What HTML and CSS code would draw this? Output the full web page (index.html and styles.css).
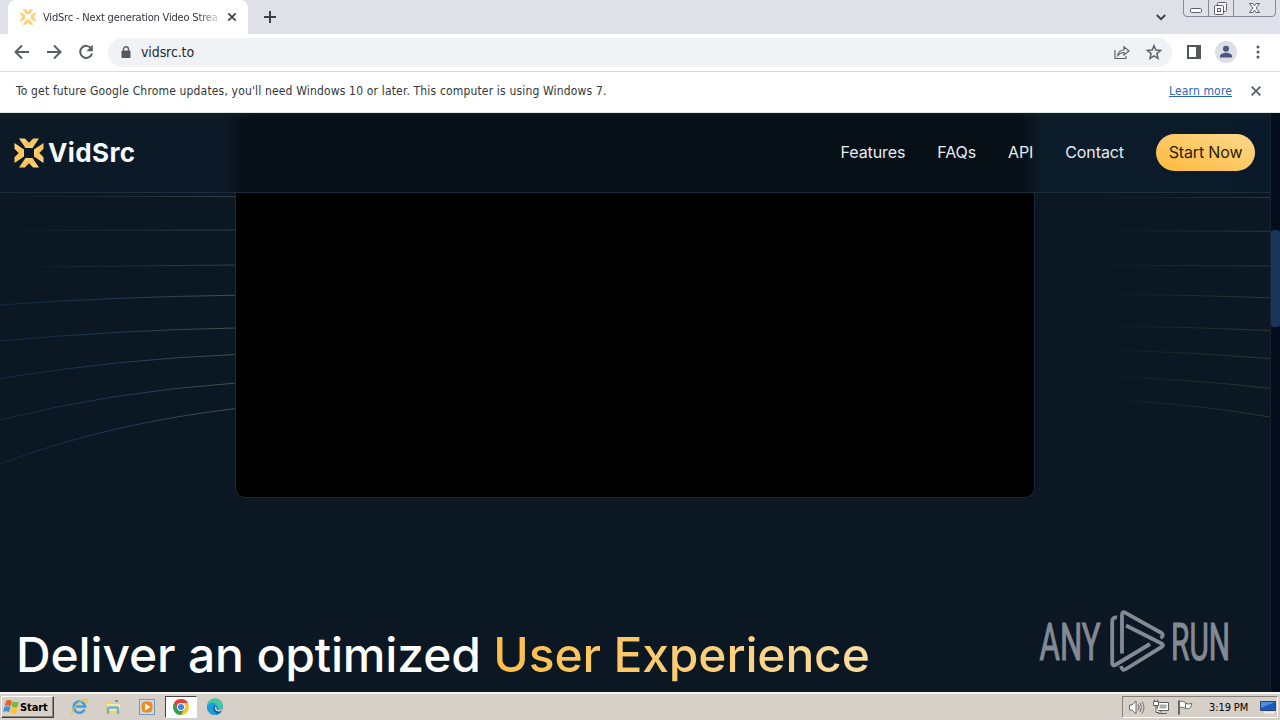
FILE: index.html
```html
<!DOCTYPE html>
<html lang="en">
<head>
  <meta charset="UTF-8">
  <meta name="viewport" content="width=device-width, initial-scale=1.0">
  <title>VidSrc - Next generation Video Streaming</title>
  <link rel="stylesheet" href="styles.css">
</head>
<body>
  <svg class="defs" width="0" height="0">
    <defs>
      <linearGradient id="gold" x1="0" y1="0" x2="1" y2="1">
        <stop offset="0" stop-color="#ffd98a"/>
        <stop offset="0.5" stop-color="#fcc257"/>
        <stop offset="1" stop-color="#fddb9c"/>
      </linearGradient>
      <symbol id="mark" viewBox="0 0 30 30">
        <path d="M5 0.500h5.800l4.200 4.200 4.200-4.200H25L18.500 10h-7z"/>
        <path d="M5 29.500h5.800l4.200-4.200 4.200 4.200H25L18.500 20h-7z"/>
        <path d="M0.500 5v5.800l4.200 4.200-4.200 4.200V25L10 18.500v-7z"/>
        <path d="M29.500 5v5.800l-4.200 4.200 4.200 4.200V25L20 18.500v-7z"/>
      </symbol>
    </defs>
  </svg>

  <header class="tabs">
    <div class="tab-edge"></div>
    <div class="tab">
      <svg class="favicon" width="16" height="16" fill="#fdcf80"><use href="#mark"/></svg>
      <span class="tab-title">VidSrc - Next generation Video Strea</span>
      <svg class="tab-close" width="10" height="10" viewBox="0 0 10 10"><path d="M1.300 1.300l7.400 7.400M8.700 1.300L1.300 8.700" stroke="#3c4043" stroke-width="1.700"/></svg>
    </div>
    <svg class="new-tab" width="12" height="12" viewBox="0 0 12 12"><path d="M6 0v12M0 6h12" stroke="#3c4043" stroke-width="2"/></svg>
    <svg class="tab-search" width="10" height="7" viewBox="0 0 10 7"><path d="M0.800 1l4.200 4.200L9.200 1" fill="none" stroke="#3c4043" stroke-width="1.800"/></svg>
    <svg class="window-buttons" width="93" height="17" viewBox="0 0 93 17" fill="none">
      <path d="M0.500 0v13q0 3.500 3.500 3.500h85q3.500 0 3.500-3.500V0M25.500 0v16M50.500 0v16" stroke="#858a96"/>
      <rect x="7.500" y="8.500" width="11" height="4" rx="1" fill="#fff" stroke="#5c606b"/>
      <rect x="34.500" y="2.500" width="9" height="9" rx="1" fill="#f4f5f7" stroke="#5c606b"/>
      <rect x="31.500" y="5.500" width="9" height="9" rx="1" fill="#fff" stroke="#5c606b"/>
      <rect x="34.500" y="8.500" width="3" height="3" stroke="#5c606b"/>
      <path d="M66.500 3.500h3.300l1.700 2.300 1.700-2.300h3.300l-3.300 4.500 3.300 4.500h-3.300l-1.700-2.300-1.700 2.300h-3.300l3.300-4.500z" fill="#fff" stroke="#5c606b"/>
    </svg>
  </header>

  <div class="toolbar">
    <div class="nav-buttons">
      <svg width="16" height="16" viewBox="0 0 16 16"><path d="M15 8H2M8 1.500L1.500 8 8 14.500"/></svg>
      <svg width="16" height="16" viewBox="0 0 16 16"><path d="M1 8h13M8 1.500L14.500 8 8 14.500"/></svg>
      <svg width="16" height="16" viewBox="0 0 16 16"><path d="M13.200 4.500A6 6 0 1 0 14 9.500"/><path d="M14.800 0.800v6.400H8.400z" class="solid"/></svg>
    </div>
    <div class="address">
      <svg width="10" height="13" viewBox="0 0 10 13"><path d="M2.500 5V3.300a2.500 2.500 0 0 1 5 0V5" fill="none" stroke="#5f6368" stroke-width="1.400"/><rect x="0.500" y="4.500" width="9" height="7.500" rx="1" fill="#54575b"/></svg>
      <span class="url">vidsrc.to</span>
      <svg class="share" width="16" height="15" viewBox="0 0 16 15"><path d="M1 5v8.500h11V11M3.700 10.500C4.200 6.500 6.500 5 10 5V1.800l5 4.200-5 4V7.500c-2.800 0-4.500.8-6.300 3z" fill="none" stroke="#5f6368" stroke-width="1.200"/></svg>
      <svg width="16" height="16" viewBox="0 0 16 16"><path d="M8 1.700l1.800 4.400 4.700.4-3.600 3.100 1.100 4.700L8 11.800l-4 2.500 1.100-4.700-3.600-3.100 4.700-.4z" fill="none" stroke="#5f6368" stroke-width="1.500"/></svg>
    </div>
    <svg class="panel" width="14" height="14" viewBox="0 0 14 14"><path d="M1 1h12v12H1z" fill="none" stroke="#54575b" stroke-width="2"/><path d="M9 0h5v14H9z" fill="#54575b"/></svg>
    <svg class="avatar" width="22" height="22" viewBox="0 0 22 22"><circle cx="11" cy="11" r="11" fill="#dcdfe5"/><circle cx="11" cy="7.800" r="3" fill="#4a5878"/><path d="M5 16.500v-1.300c0-2.200 3.700-3.400 6-3.400s6 1.200 6 3.400v1.300z" fill="#4a5878"/></svg>
    <svg class="dots" width="4" height="14" viewBox="0 0 4 14" fill="#54575b"><circle cx="2" cy="2" r="1.500"/><circle cx="2" cy="7" r="1.500"/><circle cx="2" cy="12" r="1.500"/></svg>
  </div>

  <div class="infobar">
    <span class="notice">To get future Google Chrome updates, you'll need Windows 10 or later. This computer is using Windows 7.</span>
    <a class="learn" href="#">Learn more</a>
    <svg width="10" height="10" viewBox="0 0 10 10"><path d="M0.700 0.700l8.600 8.600M9.300 0.700L0.700 9.300" stroke="#5f6368" stroke-width="1.900"/></svg>
  </div>

  <div class="viewport">
    <main class="page">
      <svg class="lines" width="1270" height="579" viewBox="0 113 1270 579" fill="none">
        <defs>
          <linearGradient id="left" gradientUnits="userSpaceOnUse" x1="0" y1="0" x2="236" y2="0">
            <stop offset="0" stop-color="#1d3157" stop-opacity="0.600"/>
            <stop offset="0.500" stop-color="#24365a"/>
            <stop offset="1" stop-color="#43524c"/>
          </linearGradient>
          <linearGradient id="left-top" gradientUnits="userSpaceOnUse" x1="0" y1="0" x2="236" y2="0">
            <stop offset="0" stop-color="#24384d" stop-opacity="0.100"/>
            <stop offset="1" stop-color="#33433f"/>
          </linearGradient>
          <linearGradient id="right" gradientUnits="userSpaceOnUse" x1="1080" y1="0" x2="1270" y2="0">
            <stop offset="0" stop-color="#26342f" stop-opacity="0"/>
            <stop offset="1" stop-color="#2c3a36"/>
          </linearGradient>
        </defs>
        <g stroke="url(#left-top)">
          <path d="M0 196.400L236 196.600"/>
          <path d="M0 230.400L236 230"/>
          <path d="M0 267.500Q110 266 236 265"/>
        </g>
        <g stroke="url(#left)">
          <path d="M0 305Q110 297 236 295.200"/>
          <path d="M0 341Q120 330 236 328"/>
          <path d="M0 378.500Q120 359 236 354.500"/>
          <path d="M0 420Q110 392 236 383"/>
          <path d="M0 464Q105 424 236 408.500"/>
        </g>
        <g stroke="url(#right)">
          <path d="M1035 197.300L1270 197.600"/>
          <path d="M1035 230.500L1270 231.300"/>
          <path d="M1080 265L1270 266"/>
          <path d="M1100 294Q1190 295 1270 297.800"/>
          <path d="M1110 326Q1190 327 1270 330.500"/>
          <path d="M1110 350Q1190 352 1270 358.500"/>
          <path d="M1120 377Q1200 380 1270 388.500"/>
          <path d="M1130 401Q1200 405 1270 417"/>
        </g>
      </svg>

      <nav class="navbar">
        <div class="brand">
          <svg width="30" height="30" fill="url(#gold)"><use href="#mark"/></svg>
          <span>VidSrc</span>
        </div>
        <div class="links">
          <a>Features</a>
          <a>FAQs</a>
          <a>API</a>
          <a>Contact</a>
        </div>
        <button class="start-now">Start Now</button>
      </nav>

      <div class="player"></div>
      <h1 class="headline">Deliver an optimized <span>User Experience</span></h1>

      <svg class="watermark" width="194" height="64" viewBox="0 0 194 64">
        <text x="1.500" y="49.500" textLength="61" lengthAdjust="spacingAndGlyphs">ANY</text>
        <text x="133" y="49.500" textLength="59" lengthAdjust="spacingAndGlyphs">RUN</text>
        <g fill="none" stroke="#838a94" stroke-width="3.800" stroke-linejoin="round">
          <path d="M79 7.500q-4.800-.5-4.800 4V53q0 3.500 3 2L112 34"/>
          <path d="M84 43.500V5q0-4 3.500-2.200L123.500 23q3 2.500-1 5"/>
          <path d="M88 15.500l35.500 18q3 1.700 0 3.500L88 59q-4 2.500-5-3"/>
        </g>
      </svg>
    </main>
    <div class="scrollbar"><div class="thumb"></div></div>
  </div>

  <footer class="taskbar">
    <button class="start">
      <svg width="17" height="16" viewBox="0 0 17 16">
        <path d="M3 2q3-2 6 0L7.700 7.300q-3-1.600-6 0z" fill="#e8622c"/>
        <path d="M9.700 2.500q3 1.500 6 0L14.500 8q-3 1.500-6-.5z" fill="#76b83f"/>
        <path d="M1.500 8q3-1.600 6 0L6 13q-3-1.500-6 0z" fill="#3f8fe0"/>
        <path d="M8.300 8.300q3 1.700 6 .3L13 14q-3 1.500-6-.5z" fill="#fbc431"/>
      </svg>
      Start
    </button>
    <div class="apps">
      <svg width="18" height="18" viewBox="0 0 18 18"><path d="M14.500 11.500A5.700 5.700 0 1 1 15 8.500H5" fill="none" stroke="#3ba0e3" stroke-width="2.600"/><path d="M2.500 16.500C-1 14 10 1 16 1.500c2 .3 1 3 0 4" fill="none" stroke="#e9bd45" stroke-width="1.300"/></svg>
      <svg width="18" height="18" viewBox="0 0 18 18"><path d="M2 3h5l1 2h8v10H2z" fill="#ebcf72"/><path d="M3 6h13v7H3z" fill="#f8eaa7"/><path d="M4 16v-5q0-1.500 1.500-1.500h7Q14 9.500 14 11v5" fill="none" stroke="#6db3d8" stroke-width="2.500"/><path d="M11 3h3" stroke="#67a75b" stroke-width="2"/></svg>
      <svg width="18" height="18" viewBox="0 0 18 18"><rect x="1.500" y="1.500" width="15" height="15" fill="#c8dced" stroke="#6f9bc0"/><rect x="3.500" y="3.500" width="11" height="11" rx="4" fill="#f38b1c"/><path d="M7 5.500v7l5.500-3.500z" fill="#fff"/></svg>
      <div class="app-active">
        <svg width="16" height="16" viewBox="0 0 16 16"><circle cx="8" cy="8" r="8" fill="#f9c52d"/><path d="M1.070 4A8 8 0 0 0 8 16l3.500-6L8 8z" fill="#2fa251"/><path d="M8 4h6.930A8 8 0 0 0 1.070 4L4.500 10z" fill="#df4434"/><circle cx="8" cy="8" r="4" fill="#fff"/><circle cx="8" cy="8" r="3.100" fill="#4285f4"/></svg>
      </div>
      <svg width="18" height="18" viewBox="0 0 18 18"><circle cx="9" cy="9" r="8" fill="#1677c8"/><path d="M1 8.500A8 8 0 0 1 17 8c.3 3-2.500 4-5.500 3 1-2-.5-4-3.500-4-3 0-5.500.5-7 1.500z" fill="#43c7a0"/><path d="M1 9c1-5 8-6 9-2-3 0-4 5-.5 8 .5 1 2 1.500 3 1.200C7 18.500 1 15 1 9z" fill="#1aa0dc"/><path d="M9 8c-2 3 .5 6.500 6.700 5.200C14 16 9 15 7.500 12 6.800 10.500 7.500 9 9 8z" fill="#174f9b"/><path d="M9.500 8.300q1.500.5 1 2.600 3 2 6.300-.3-.3 1.900-1.300 2.500-5 1.200-6.500-1.500-.5-2 .5-3.300z" fill="#d6d0c8"/></svg>
    </div>
    <div class="tray">
      <svg width="17" height="15" viewBox="0 0 17 15" fill="#fff" stroke="#6b6b6b"><path d="M1.500 5h2.500l4-4v13l-4-4H1.500z"/><path d="M10 4.500q2 3 0 6M12 3q3 4.500 0 9M14 1.500q4 6 0 12" fill="none"/></svg>
      <svg class="network" width="16" height="16" viewBox="0 0 16 16" fill="#fff" stroke="#5f5f5f"><path d="M4.500 3.500h11v8h-11z"/><path d="M6.500 5.500h7v4h-7z" fill="#aaa" stroke="none"/><path d="M8 11.500v2M5 14.500h9"/><path d="M0.500 2.500h5v4h-5zM1.500 0.500v2M4.500 0.500v2M3 6.500v7h3"/></svg>
      <svg class="flag" width="16" height="15" viewBox="0 0 16 15" fill="#fff" stroke="#6b6b6b"><path d="M1.500 0.500h1v14h-1zM2.500 1.500q3-1 6 1v6q-3-2-6-1zM8.500 3.500q3 1 6.500 0-1 4-3 5.200-2 .5-3.500-.7z"/></svg>
      <span class="clock">3:19 PM</span>
      <svg class="desktop" width="16" height="14" viewBox="0 0 16 14"><path d="M0.500 1.500h15v9h-15z" fill="#1b5bbb" stroke="#2b456f"/><path d="M1 2h14L1 8z" fill="#4a8de0"/><path d="M4 12.500h10" stroke="#efefef" stroke-width="2"/></svg>
    </div>
  </footer>
</body>
</html>
```

FILE: styles.css
```css
* {
  box-sizing: border-box;
}
body {
  margin: 0;
  width: 1280px;
  height: 720px;
  overflow: hidden;
  display: flex;
  flex-direction: column;
  font-family: "DejaVu Sans Condensed", "DejaVu Sans", sans-serif;
  font-stretch: condensed;
  background: #fff;
}
svg {
  display: block;
  flex: none;
}
.defs {
  position: absolute;
}

/* browser window */
.tabs {
  height: 34px;
  flex: none;
  display: flex;
  align-items: flex-start;
  background: #dee1e8;
}
.tab-edge {
  width: 8px;
  height: 34px;
}
.tab {
  width: 240px;
  height: 34px;
  padding: 0 11px 0 12px;
  display: flex;
  align-items: center;
  background: #fff;
  border-radius: 8px 8px 0 0;
}
.tab-title {
  width: 178px;
  margin: 0 6px 0 7px;
  font-size: 11px;
  letter-spacing: -0.18px;
  white-space: nowrap;
  color: #33363a;
  -webkit-mask-image: linear-gradient(90deg, #000 155px, transparent 180px);
  mask-image: linear-gradient(90deg, #000 155px, transparent 180px);
}
.new-tab {
  margin: 11px 0 0 16px;
}
.tab-search {
  margin: 14px 17px 0 auto;
}
.window-buttons {
  margin-right: 4px;
}
.toolbar {
  height: 38px;
  flex: none;
  padding: 0 20px 1px 14px;
  display: flex;
  align-items: center;
  border-bottom: 1px solid #d9dbdf;
}
.nav-buttons {
  display: flex;
  gap: 16px;
  margin-right: 14px;
}
.nav-buttons path {
  fill: none;
  stroke: #5b5e62;
  stroke-width: 2;
}
.nav-buttons .solid {
  fill: #5b5e62;
  stroke: none;
}
.address {
  width: 1064px;
  height: 29px;
  padding: 0 10px 0 13px;
  display: flex;
  align-items: center;
  background: #f0f2f5;
  border-radius: 15px;
}
.url {
  margin-left: 10px;
  font-size: 14px;
  letter-spacing: -0.1px;
  color: #26292d;
}
.share {
  margin: 0 16px 0 auto;
}
.panel {
  margin-left: 15px;
}
.avatar {
  margin-left: 14px;
}
.dots {
  margin-left: auto;
}
.infobar {
  height: 41px;
  flex: none;
  padding: 0 19px 2px 16px;
  display: flex;
  align-items: center;
  font-size: 12px;
  color: #33363a;
  border-bottom: 1px solid #dfe8e8;
}
.notice {
  letter-spacing: 0.165px;
}
.learn {
  margin: 0 19px 0 auto;
  letter-spacing: 0.15px;
  color: #2a66bd;
}

/* vidsrc page */
.viewport {
  height: 579px;
  flex: none;
  display: flex;
}
.page {
  width: 1270px;
  position: relative;
  background: #0b1722;
  font-family: Inter, sans-serif;
  font-stretch: normal;
}
.lines {
  position: absolute;
  left: 0;
  top: 0;
}
.navbar {
  position: relative;
  height: 80px;
  padding: 0 15px 0 14px;
  display: flex;
  align-items: center;
  border-bottom: 1px solid #1c2e3b;
  background:
    linear-gradient(180deg, rgba(20, 34, 38, 0.6), transparent 7px),
    linear-gradient(90deg, #0c1a28 0, #0c1a27 225px, #060e16 246px, #060e16 1020px, #0d1c29 1042px, #0b1a2a 1270px);
}
.brand {
  display: flex;
  align-items: center;
  gap: 4px;
  font-size: 26px;
  font-weight: 700;
  letter-spacing: 0.4px;
  color: #f5f9ff;
}
.links {
  display: flex;
  gap: 32px;
  margin: 0 32px 0 auto;
  padding-bottom: 2px;
  font-size: 16px;
  letter-spacing: -0.1px;
  color: #e6ebf2;
}
.start-now {
  width: 99px;
  height: 37px;
  padding: 0 0 2px;
  border: none;
  border-radius: 19px;
  font-family: Inter, sans-serif;
  font-size: 16px;
  letter-spacing: -0.15px;
  color: #2c1c08;
  background: linear-gradient(20deg, #fdba3b, #fcc964 50%, #fbd88f);
}
.player {
  position: relative;
  width: 800px;
  height: 305px;
  margin-left: 235px;
  background: #000;
  border: 1px solid #182a36;
  border-top: none;
  border-radius: 0 0 10px 10px;
}
.headline {
  position: relative;
  margin: 128px 0 0 16px;
  font-size: 48px;
  line-height: 58px;
  font-weight: 500;
  letter-spacing: -0.16px;
  white-space: nowrap;
  color: #fff;
}
.headline span {
  color: transparent;
  background: linear-gradient(90deg, #fdbe48, #fbdca0);
  -webkit-background-clip: text;
  background-clip: text;
}
.watermark {
  position: absolute;
  left: 1038px;
  top: 497px;
}
.watermark text {
  font-family: Roboto, sans-serif;
  font-size: 52px;
  fill: #838a94;
  stroke: #838a94;
  stroke-width: 1.2px;
}
.scrollbar {
  width: 10px;
  padding-top: 117px;
  background: #030d1b;
  border-left: 1px solid #142332;
}
.thumb {
  height: 97px;
  border-radius: 3px;
  background: #19365a;
}

/* taskbar */
.taskbar {
  height: 28px;
  flex: none;
  padding: 0 2px 0 1px;
  display: flex;
  align-items: center;
  background: #d6d0c8;
  border-top: 2px solid #f6f4f1;
}
.start {
  width: 53px;
  height: 22px;
  padding: 0 0 0 1px;
  display: flex;
  align-items: center;
  border: 1px solid;
  border-color: #fff #404040 #404040 #fff;
  box-shadow: inset -1px -1px #8a8680;
  background: #d6d0c8;
  font-family: "DejaVu Sans Condensed", "DejaVu Sans", sans-serif;
  font-size: 11px;
  font-weight: 700;
  font-stretch: condensed;
  letter-spacing: -0.1px;
  color: #000;
}
.apps {
  display: flex;
  align-items: center;
  margin-left: 16px;
  gap: 16px;
}
.app-active {
  width: 32px;
  height: 22px;
  margin: 0 -7px;
  display: flex;
  align-items: center;
  justify-content: center;
  background: #fff;
  border: 1px solid;
  border-color: #404040 #fff #fff #404040;
}
.tray {
  width: 156px;
  height: 22px;
  margin-left: auto;
  padding: 0 1px 0 5px;
  display: flex;
  align-items: center;
  border: 1px solid;
  border-color: #858079 #fff #fff #858079;
}
.network {
  margin-left: 8px;
}
.flag {
  margin-left: 8px;
}
.clock {
  margin-left: 16px;
  font-size: 11px;
  letter-spacing: -0.1px;
  white-space: nowrap;
  color: #000;
}
.desktop {
  margin-left: auto;
}
```
